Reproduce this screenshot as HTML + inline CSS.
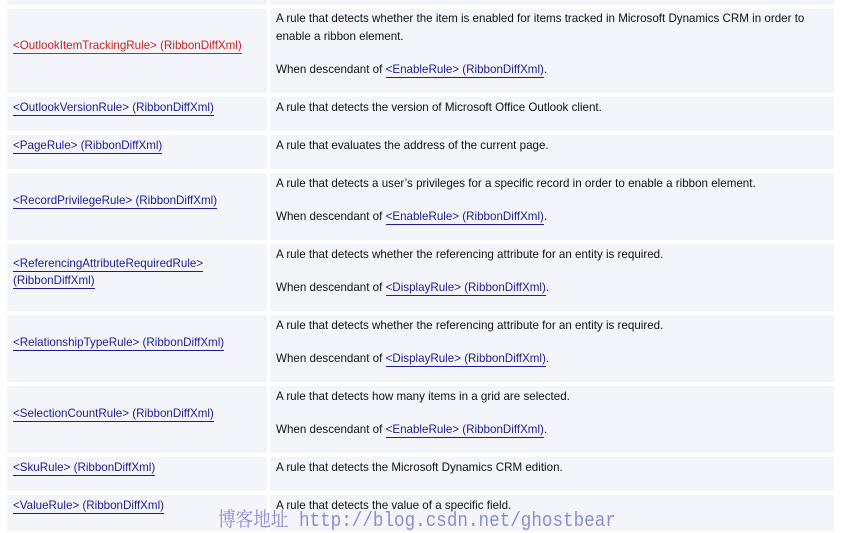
<!DOCTYPE html>
<html><head><meta charset="utf-8"><style>
body{margin:0;width:842px;height:531px;overflow:hidden;background:#fff;font-family:"Liberation Sans",sans-serif;font-size:11.6px;color:#111;position:relative}
.c{position:absolute;background:#f4f5fb}
.l{left:7px;width:260px}
.r{left:270px;width:564px}
.t{position:absolute;white-space:nowrap;margin-top:1px}
a{color:#1c1c96;text-decoration:none;border-bottom:1px solid #1c1c96;padding-bottom:1px}
a.red{color:#cc2020;border-color:#cc2020}
.wm{position:absolute;left:218px;top:503px;font-family:"Liberation Mono","Noto Serif CJK SC",monospace;font-size:20px;color:#7a7ad0;opacity:.85;white-space:nowrap;transform:scaleX(0.88);transform-origin:left top}
</style></head><body>
<div class="c l" style="top:0;height:5px"></div><div class="c r" style="top:0;height:5px"></div>
<div class="c l" style="top:9px;height:84px"></div><div class="c r" style="top:9px;height:84px"></div>
<div class="c l" style="top:97px;height:34px"></div><div class="c r" style="top:97px;height:34px"></div>
<div class="c l" style="top:135px;height:34px"></div><div class="c r" style="top:135px;height:34px"></div>
<div class="c l" style="top:173px;height:67px"></div><div class="c r" style="top:173px;height:67px"></div>
<div class="c l" style="top:244px;height:67px"></div><div class="c r" style="top:244px;height:67px"></div>
<div class="c l" style="top:315px;height:67px"></div><div class="c r" style="top:315px;height:67px"></div>
<div class="c l" style="top:386px;height:67px"></div><div class="c r" style="top:386px;height:67px"></div>
<div class="c l" style="top:457px;height:34px"></div><div class="c r" style="top:457px;height:34px"></div>
<div class="c l" style="top:495px;height:36px"></div><div class="c r" style="top:495px;height:36px"></div>

<div class="t" style="left:13px;top:38px"><a class="red">&lt;OutlookItemTrackingRule&gt; (RibbonDiffXml)</a></div>
<div class="t" style="left:276px;top:11px">A rule that detects whether the item is enabled for items tracked in Microsoft Dynamics CRM in order to</div>
<div class="t" style="left:276px;top:29px">enable a ribbon element.</div>
<div class="t" style="left:276px;top:62px">When descendant of <a>&lt;EnableRule&gt; (RibbonDiffXml)</a>.</div>

<div class="t" style="left:13px;top:100px"><a>&lt;OutlookVersionRule&gt; (RibbonDiffXml)</a></div>
<div class="t" style="left:276px;top:100px">A rule that detects the version of Microsoft Office Outlook client.</div>

<div class="t" style="left:13px;top:138px"><a>&lt;PageRule&gt; (RibbonDiffXml)</a></div>
<div class="t" style="left:276px;top:138px">A rule that evaluates the address of the current page.</div>

<div class="t" style="left:13px;top:193px"><a>&lt;RecordPrivilegeRule&gt; (RibbonDiffXml)</a></div>
<div class="t" style="left:276px;top:176px">A rule that detects a user’s privileges for a specific record in order to enable a ribbon element.</div>
<div class="t" style="left:276px;top:209px">When descendant of <a>&lt;EnableRule&gt; (RibbonDiffXml)</a>.</div>

<div class="t" style="left:13px;top:256px"><a>&lt;ReferencingAttributeRequiredRule&gt;</a></div>
<div class="t" style="left:13px;top:273px"><a>(RibbonDiffXml)</a></div>
<div class="t" style="left:276px;top:247px">A rule that detects whether the referencing attribute for an entity is required.</div>
<div class="t" style="left:276px;top:280px">When descendant of <a>&lt;DisplayRule&gt; (RibbonDiffXml)</a>.</div>

<div class="t" style="left:13px;top:335px"><a>&lt;RelationshipTypeRule&gt; (RibbonDiffXml)</a></div>
<div class="t" style="left:276px;top:318px">A rule that detects whether the referencing attribute for an entity is required.</div>
<div class="t" style="left:276px;top:351px">When descendant of <a>&lt;DisplayRule&gt; (RibbonDiffXml)</a>.</div>

<div class="t" style="left:13px;top:406px"><a>&lt;SelectionCountRule&gt; (RibbonDiffXml)</a></div>
<div class="t" style="left:276px;top:389px">A rule that detects how many items in a grid are selected.</div>
<div class="t" style="left:276px;top:422px">When descendant of <a>&lt;EnableRule&gt; (RibbonDiffXml)</a>.</div>

<div class="t" style="left:13px;top:460px"><a>&lt;SkuRule&gt; (RibbonDiffXml)</a></div>
<div class="t" style="left:276px;top:460px">A rule that detects the Microsoft Dynamics CRM edition.</div>

<div class="t" style="left:13px;top:498px"><a>&lt;ValueRule&gt; (RibbonDiffXml)</a></div>
<div class="t" style="left:276px;top:498px">A rule that detects the value of a specific field.</div>

<div class="wm">博客地址 http://blog.csdn.net/ghostbear</div>
</body></html>
